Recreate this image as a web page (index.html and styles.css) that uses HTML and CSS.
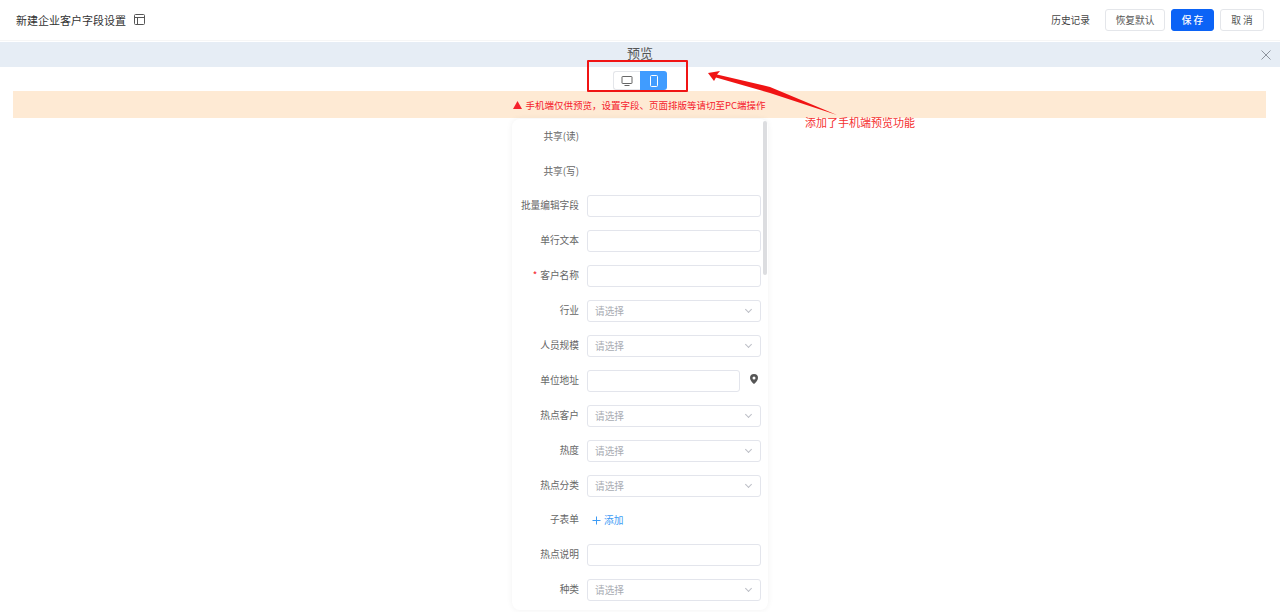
FILE: index.html
```html
<!DOCTYPE html>
<html lang="zh">
<head>
    <meta charset="UTF-8" />
    <title>新建企业客户字段设置</title>
    <link rel="stylesheet" href="styles.css">
</head>
<body>

    <!-- 页眉 -->
    <header class="topbar">
        <div class="topbar-title">
            <h1>新建企业客户字段设置</h1>
            <svg class="layout-icon" width="11" height="11" viewBox="0 0 11 11" fill="none" stroke="#555" stroke-width="1">
                <rect x="0.5" y="0.5" width="10" height="10" rx="1" />
                <path d="M0.5 3.5H10.5M3.5 3.5V10.5" />
            </svg>
        </div>
        <div class="topbar-actions">
            <a class="history-link">历史记录</a>
            <button class="btn btn-default">恢复默认</button>
            <button class="btn btn-primary">保 存</button>
            <button class="btn btn-cancel">取 消</button>
        </div>
    </header>

    <!-- 预览标题 -->
    <div class="preview-bar">
        <span>预览</span>
        <svg class="close-icon" width="10" height="10" viewBox="0 0 10 10" stroke="#8c939d" stroke-width="1">
            <path d="M0.5 0.5L9.5 9.5M9.5 0.5L0.5 9.5" />
        </svg>
    </div>

    <!-- 切换 -->
    <div class="device-row">
        <div class="device-switch">
            <span class="device-item">
                <svg width="12" height="12" viewBox="0 0 12 12" fill="none" stroke="#666" stroke-width="1">
                    <rect x="1" y="1.5" width="10" height="7" rx="0.5" />
                    <path d="M3.5 10.5H8.5" />
                </svg>
            </span>
            <span class="device-item active">
                <svg width="12" height="12" viewBox="0 0 12 12" fill="none" stroke="#fff" stroke-width="1">
                    <rect x="2.5" y="0.5" width="7" height="11" rx="1" />
                </svg>
            </span>
        </div>
    </div>

    <!-- 提示 -->
    <div class="notice">
        <svg width="9" height="8" viewBox="0 0 9 8"><path d="M4.5 0L9 8H0Z" fill="#f5222d" /></svg>
        <span>手机端仅供预览，设置字段、页面排版等请切至PC端操作</span>
    </div>

    <!-- 手机预览表单 -->
    <div class="phone-wrap">
        <div class="phone-card">
            <div class="form-row"><label>共享(读)</label></div>
            <div class="form-row"><label>共享(写)</label></div>
            <div class="form-row"><label>批量编辑字段</label><div class="field"></div></div>
            <div class="form-row"><label>单行文本</label><div class="field"></div></div>
            <div class="form-row"><label><i>*</i>客户名称</label><div class="field"></div></div>
            <div class="form-row"><label>行业</label><div class="field select">请选择</div></div>
            <div class="form-row"><label>人员规模</label><div class="field select">请选择</div></div>
            <div class="form-row">
                <label>单位地址</label>
                <div class="field short"></div>
                <svg class="pin" width="8" height="10" viewBox="0 0 8 10">
                    <path fill-rule="evenodd" d="M4 0a4 4 0 0 1 4 4c0 2.4-2.6 4.8-4 6C2.6 8.8 0 6.4 0 4a4 4 0 0 1 4-4Zm0 2.5a1.5 1.5 0 1 0 0 3 1.5 1.5 0 0 0 0-3Z" fill="#555" />
                </svg>
            </div>
            <div class="form-row"><label>热点客户</label><div class="field select">请选择</div></div>
            <div class="form-row"><label>热度</label><div class="field select">请选择</div></div>
            <div class="form-row"><label>热点分类</label><div class="field select">请选择</div></div>
            <div class="form-row">
                <label>子表单</label>
                <a class="add-link">
                    <svg width="9" height="9" viewBox="0 0 9 9" stroke="#3d9bf5" stroke-width="1"><path d="M4.5 0.5V8.5M0.5 4.5H8.5" /></svg>
                    添加
                </a>
            </div>
            <div class="form-row"><label>热点说明</label><div class="field"></div></div>
            <div class="form-row"><label>种类</label><div class="field select">请选择</div></div>
            <div class="scroll-thumb"></div>
        </div>
    </div>

    <!-- 标注 -->
    <div class="mark-box"></div>
    <svg class="mark-arrow" width="130" height="46" viewBox="0 0 130 46">
        <path d="M0 2L12 0L9 3.5L62 16L129 44L62 22L8 6.500L6 10Z" fill="#f01414" />
    </svg>
    <div class="mark-text">添加了手机端预览功能</div>

</body>
</html>
```

FILE: styles.css
```css
/* 样式 */
html, body {
    height: 100%;
    margin: 0;
    padding: 0;
    overflow: hidden;
}

body {
    position: relative;
    background: #fff;
    font-family: "Noto Sans CJK SC", "Liberation Sans", sans-serif;
    font-size: 9.7px;
    color: #555;
}

/* 页眉 */
.topbar {
    height: 41px;
    box-sizing: border-box;
    display: flex;
    justify-content: space-between;
    align-items: center;
    padding: 0 16px;
    border-bottom: 1px solid #f6f6f6;
}

.topbar-title {
    display: flex;
    align-items: center;
}

.topbar-title h1 {
    margin: 0;
    font-size: 11px;
    font-weight: 400;
    color: #333;
}

.layout-icon {
    margin: -1px 0 0 8px;
}

.topbar-actions {
    display: flex;
    align-items: center;
}

.history-link {
    margin-right: 15px;
    color: #444;
}

.btn {
    height: 22px;
    box-sizing: border-box;
    padding: 0;
    border: 1px solid #e4e6ea;
    border-radius: 3px;
    background: #fff;
    font-family: inherit;
    font-size: 9.7px;
    color: #555;
}

.btn-default {
    width: 60px;
}

.btn-primary {
    width: 43px;
    margin: 0 6px;
    border-color: #0b63f6;
    background: #0b63f6;
    color: #fff;
    font-weight: 500;
}

.btn-cancel {
    width: 44px;
}

/* 预览标题 */
.preview-bar {
    position: relative;
    height: 25px;
    margin-top: 1px;
    background: #e6edf5;
    text-align: center;
    font-size: 13px;
    line-height: 22px;
    color: #555;
}

.close-icon {
    position: absolute;
    right: 9px;
    top: 8px;
}

/* 设备切换 */
.device-row {
    display: flex;
    justify-content: center;
    padding-top: 4px;
    height: 20px;
}

.device-switch {
    display: flex;
    height: 19px;
}

.device-item {
    width: 27px;
    box-sizing: border-box;
    display: flex;
    align-items: center;
    justify-content: center;
    border: 1px solid #e4e6ea;
    border-right: none;
    border-radius: 3px 0 0 3px;
}

.device-item.active {
    border: none;
    border-radius: 0 3px 3px 0;
    background: #409cff;
}

/* 提示 */
.notice {
    height: 27px;
    margin: 0 14px 0 13px;
    display: flex;
    align-items: center;
    justify-content: center;
    gap: 3px;
    background: #feead4;
    color: #f5222d;
    font-size: 9.5px;
}

/* 手机预览 */
.phone-wrap {
    display: flex;
    justify-content: center;
    padding-top: 1.2px;
}

.phone-card {
    position: relative;
    width: 256px;
    height: 491px;
    border-radius: 8px;
    background: #fff;
    box-shadow: 0 0 6px rgba(0, 0, 0, 0.06);
}

.form-row {
    height: 34.9px;
    display: flex;
    align-items: center;
}

.form-row label {
    flex: 0 0 67px;
    margin: -2px 8px 0 0;
    text-align: right;
    white-space: nowrap;
    color: #666;
}

.form-row label i {
    margin-right: 3px;
    font-style: normal;
    color: #f5222d;
}

.field {
    width: 174px;
    height: 22px;
    box-sizing: border-box;
    padding-left: 7px;
    border: 1px solid #e3e5ec;
    border-radius: 3px;
    line-height: 20px;
    color: #a8abb2;
    background: #fff;
}

.field.short {
    width: 153px;
}

/* 下拉箭头 */
.field.select {
    position: relative;
}

.field.select::after {
    content: "";
    position: absolute;
    right: 9px;
    top: 6px;
    width: 4px;
    height: 4px;
    border-right: 1px solid #bcbfc6;
    border-bottom: 1px solid #bcbfc6;
    transform: rotate(45deg);
}

.pin {
    margin: -3px 0 0 10px;
}

.add-link {
    display: flex;
    align-items: center;
    gap: 3px;
    margin-left: 5px;
    color: #3d9bf5;
}

.scroll-thumb {
    position: absolute;
    right: 1px;
    top: 2px;
    width: 4px;
    height: 154px;
    border-radius: 2px;
    background: #dcdde0;
}

/* 标注 */
.mark-box {
    position: absolute;
    left: 587px;
    top: 60px;
    width: 101px;
    height: 32px;
    box-sizing: border-box;
    border: 2px solid #f01414;
    border-radius: 1px;
}

.mark-arrow {
    position: absolute;
    left: 708px;
    top: 71px;
}

.mark-text {
    position: absolute;
    left: 805px;
    top: 114px;
    font-size: 11px;
    color: #f53030;
}
```
